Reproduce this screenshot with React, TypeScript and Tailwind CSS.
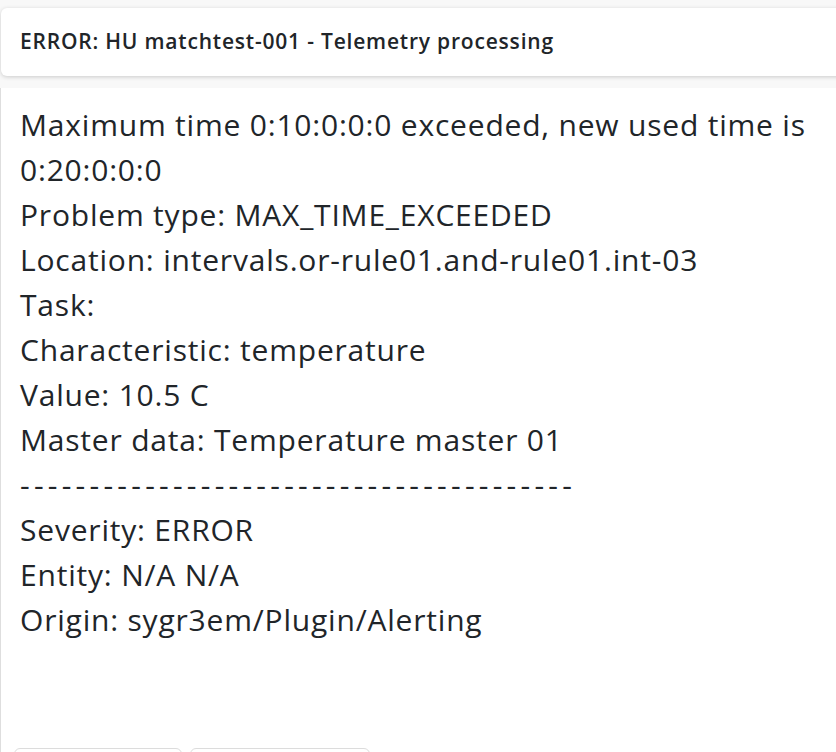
import React from 'react';

const lines = [
  'Maximum time 0:10:0:0:0 exceeded, new used time is 0:20:0:0:0',
  'Problem type: MAX_TIME_EXCEEDED',
  'Location: intervals.or-rule01.and-rule01.int-03',
  'Task:',
  'Characteristic: temperature',
  'Value: 10.5 C',
  'Master data: Temperature master 01',
];

const footer = [
  'Severity: ERROR',
  'Entity: N/A N/A',
  'Origin: sygr3em/Plugin/Alerting',
];

export default function App() {
  return (
    <div
      className="h-[752px] overflow-hidden bg-[#f8f8f8] text-[#212529]"
      style={{ fontFamily: '"Open Sans", "Noto Sans", sans-serif' }}
    >
      {/* titulo do alerta */}
      <div className="pt-[8px] pl-[1px]">
        <div className="h-[68px] w-[860px] rounded-l-md bg-white shadow-[0_1px_4px_rgba(0,0,0,0.18)] flex items-center pl-[19px]">
          <span className="text-[21px] font-semibold tracking-[0.8px]">
            ERROR: HU matchtest-001 - Telemetry processing
          </span>
        </div>
      </div>

      {/* corpo da mensagem */}
      <div className="mt-[12px] h-[700px] bg-white border-l border-[#dedede] pl-[19px] pt-[14px]">
        <div className="w-[810px] text-[30px] leading-[45px] tracking-[0.8px]">
          {lines.map((l, i) => (
            <div key={i}>{l}</div>
          ))}
          <div className="tracking-[4.25px]">----------------------------------------</div>
          {footer.map((l, i) => (
            <div key={i}>{l}</div>
          ))}
        </div>

        <div className="mt-[106px] flex gap-[8px] -ml-[6px]">
          <button className="h-[40px] w-[168px] rounded-md border border-[#dcdcdc] bg-white" />
          <button className="h-[40px] w-[180px] rounded-md border border-[#dcdcdc] bg-white" />
        </div>
      </div>
    </div>
  );
}
